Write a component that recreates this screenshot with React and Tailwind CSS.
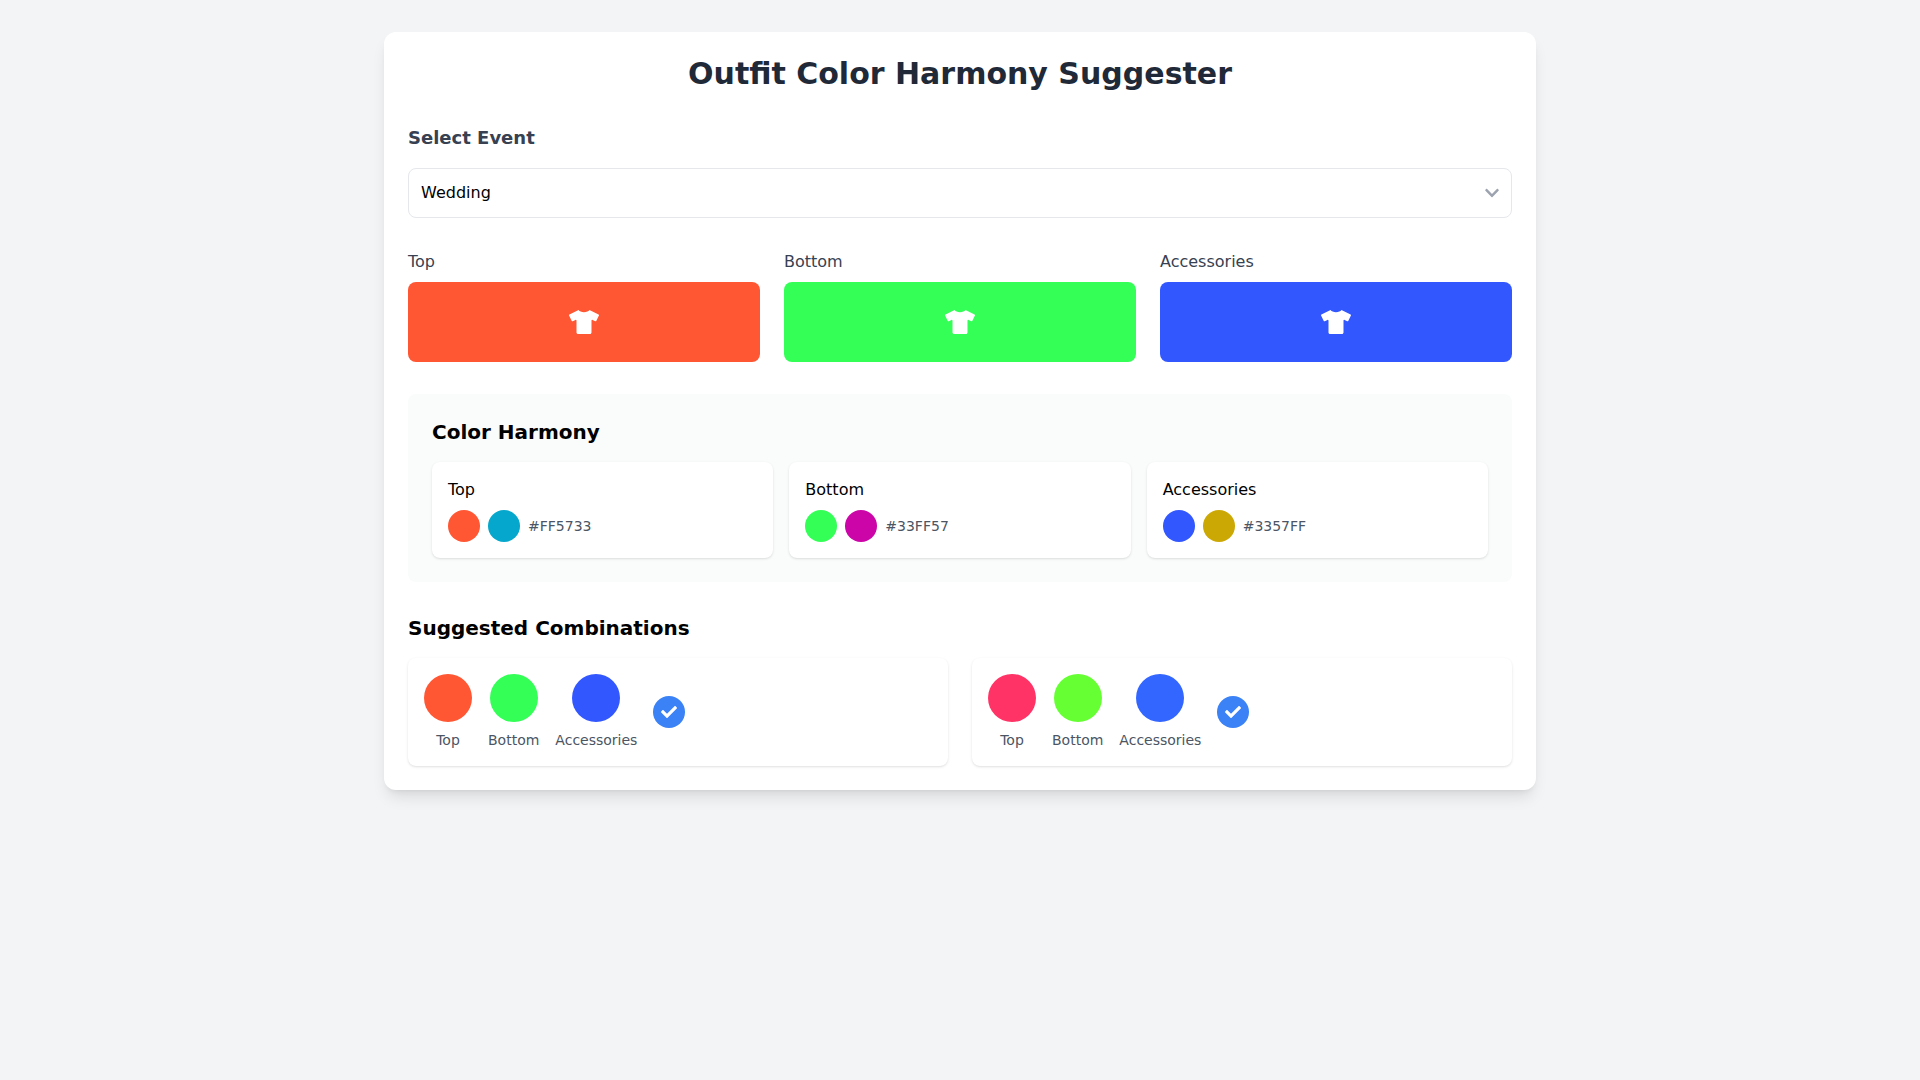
import React, { useState } from "react";
import { FaCheck, FaChevronDown, FaTshirt } from "react-icons/fa";

const pieces = [
  { label: "Top", bg: "bg-[#FF5733]" },
  { label: "Bottom", bg: "bg-[#33FF57]" },
  { label: "Accessories", bg: "bg-[#3357FF]" },
];

const harmony = [
  { label: "Top", base: "bg-[#FF5733]", match: "bg-[#05A8CC]", hex: "#FF5733" },
  { label: "Bottom", base: "bg-[#33FF57]", match: "bg-[#CC05A8]", hex: "#33FF57" },
  { label: "Accessories", base: "bg-[#3357FF]", match: "bg-[#CCA805]", hex: "#3357FF" },
];

const combinations = [
  [
    { label: "Top", bg: "bg-[#FF5733]" },
    { label: "Bottom", bg: "bg-[#33FF57]" },
    { label: "Accessories", bg: "bg-[#3357FF]" },
  ],
  [
    { label: "Top", bg: "bg-[#FF3366]" },
    { label: "Bottom", bg: "bg-[#66FF33]" },
    { label: "Accessories", bg: "bg-[#3366FF]" },
  ],
];

export default function App() {
  const [event, setEvent] = useState("Wedding");

  return (
    <div className="min-h-screen bg-[#f3f4f6] pt-8 font-['DejaVu_Sans',sans-serif] text-black">
      <div className="mx-auto w-[1152px] rounded-xl bg-white p-6 shadow-lg">
        <h1 className="mb-8 text-center text-3xl font-bold text-[#1f2937]">
          Outfit Color Harmony Suggester
        </h1>

        {/* Event picker */}
        <h2 className="mb-4 text-lg font-semibold text-[#374151]">Select Event</h2>
        <div className="relative mb-8">
          <select
            className="block w-full appearance-none rounded-lg border border-[#e5e7eb] bg-white px-3 py-3 text-base outline-none"
            value={event}
            onChange={(e) => setEvent(e.target.value)}
          >
            <option>Wedding</option>
            <option>Party</option>
            <option>Casual</option>
          </select>
          <FaChevronDown className="pointer-events-none absolute right-3 top-[17px] text-base text-[#9ca3af]" />
        </div>

        {/* Outfit pieces */}
        <div className="mb-8 grid grid-cols-3 gap-6">
          {pieces.map((piece) => (
            <div key={piece.label}>
              <div className="mb-2 text-base text-[#374151]">{piece.label}</div>
              <div className={`flex h-20 items-center justify-center rounded-lg text-white ${piece.bg}`}>
                <FaTshirt className="text-[30px]" />
              </div>
            </div>
          ))}
        </div>

        {/* Color harmony */}
        <div className="mb-8 rounded-lg bg-[#fafbfb] p-6">
          <h3 className="mb-4 text-xl font-bold">Color Harmony</h3>
          <div className="grid grid-cols-3 gap-4">
            {harmony.map((item) => (
              <div key={item.label} className="rounded-lg bg-white p-4 shadow-sm">
                <div className="mb-2 text-base">{item.label}</div>
                <div className="flex items-center gap-2">
                  <div className={`h-8 w-8 rounded-full ${item.base}`} />
                  <div className={`h-8 w-8 rounded-full ${item.match}`} />
                  <span className="text-sm text-[#4b5563]">{item.hex}</span>
                </div>
              </div>
            ))}
          </div>
        </div>

        {/* Suggested combinations */}
        <h3 className="mb-4 text-xl font-bold">Suggested Combinations</h3>
        <div className="grid grid-cols-2 gap-6">
          {combinations.map((combo, i) => (
            <div key={i} className="flex items-center gap-4 rounded-lg bg-white p-4 shadow-sm">
              {combo.map((swatch) => (
                <div key={swatch.label} className="flex flex-col items-center">
                  <div className={`h-12 w-12 rounded-full ${swatch.bg}`} />
                  <span className="mt-2 text-sm text-[#4b5563]">{swatch.label}</span>
                </div>
              ))}
              <div className="flex h-8 w-8 items-center justify-center rounded-full bg-[#3b82f6] text-white">
                <FaCheck className="text-base" />
              </div>
            </div>
          ))}
        </div>
      </div>
    </div>
  );
}
